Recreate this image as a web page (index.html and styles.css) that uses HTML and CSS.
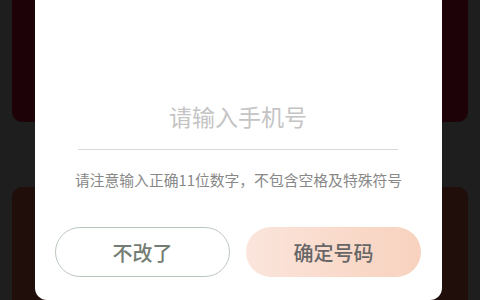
FILE: index.html
```html
<!DOCTYPE html>
<html lang="zh-CN">
<head>
<meta charset="utf-8">
<title>修改手机号</title>
<link rel="stylesheet" href="styles.css">
</head>
<body>
<div class="page">
  <div class="card card-top"></div>
  <div class="card card-bottom"></div>
</div>
<div class="modal">
  <div class="field">请输入手机号</div>
  <p class="hint">请注意输入正确11位数字，不包含空格及特殊符号</p>
  <div class="actions">
    <button class="btn btn-cancel">不改了</button>
    <button class="btn btn-ok">确定号码</button>
  </div>
</div>
</body>
</html>
```

FILE: styles.css
```css
* { box-sizing: border-box; }
html, body {
  margin: 0;
  width: 480px;
  height: 300px;
  overflow: hidden;
}
body {
  position: relative;
  background: #1e1e1e;
  font-family: "Noto Sans CJK SC", "Noto Sans", sans-serif;
}
.page {
  display: flex;
  flex-direction: column;
  gap: 65px;
  padding: 0 12px;
  height: 300px;
}
.card {
  border-radius: 10px;
}
.card-top {
  height: 122px;
  border-radius: 0 0 10px 10px;
  background: #1d0307;
}
.card-bottom {
  flex: 1;
  border-radius: 10px 10px 0 0;
  background: #200e0a;
}
.modal {
  position: absolute;
  left: 35px;
  top: 0;
  width: 407px;
  height: 300px;
  background: #ffffff;
  border-radius: 0 0 12px 12px;
}
.field {
  margin: 0 44px 0 43px;
  padding: 99px 0 16px;
  line-height: 34px;
  font-size: 23px;
  color: #c4c4c4;
  text-align: center;
  border-bottom: 1px solid #d9d9d9;
}
.hint {
  margin: 20px 0 0;
  line-height: 20px;
  font-size: 14.8px;
  color: #888888;
  text-align: center;
}
.actions {
  display: flex;
  gap: 16px;
  padding: 0 20px;
  margin-top: 37px;
}
.btn {
  width: 175px;
  height: 50px;
  border-radius: 25px;
  font-family: inherit;
  font-size: 20px;
  font-weight: 500;
  padding: 0;
}
.btn-cancel {
  background: #ffffff;
  border: 1px solid #bcc7bc;
  color: #737d73;
}
.btn-ok {
  border: none;
  background: linear-gradient(90deg, #fbe5dc 0%, #f9d9c9 60%, #f8d2bf 100%);
  color: #666666;
}
```
